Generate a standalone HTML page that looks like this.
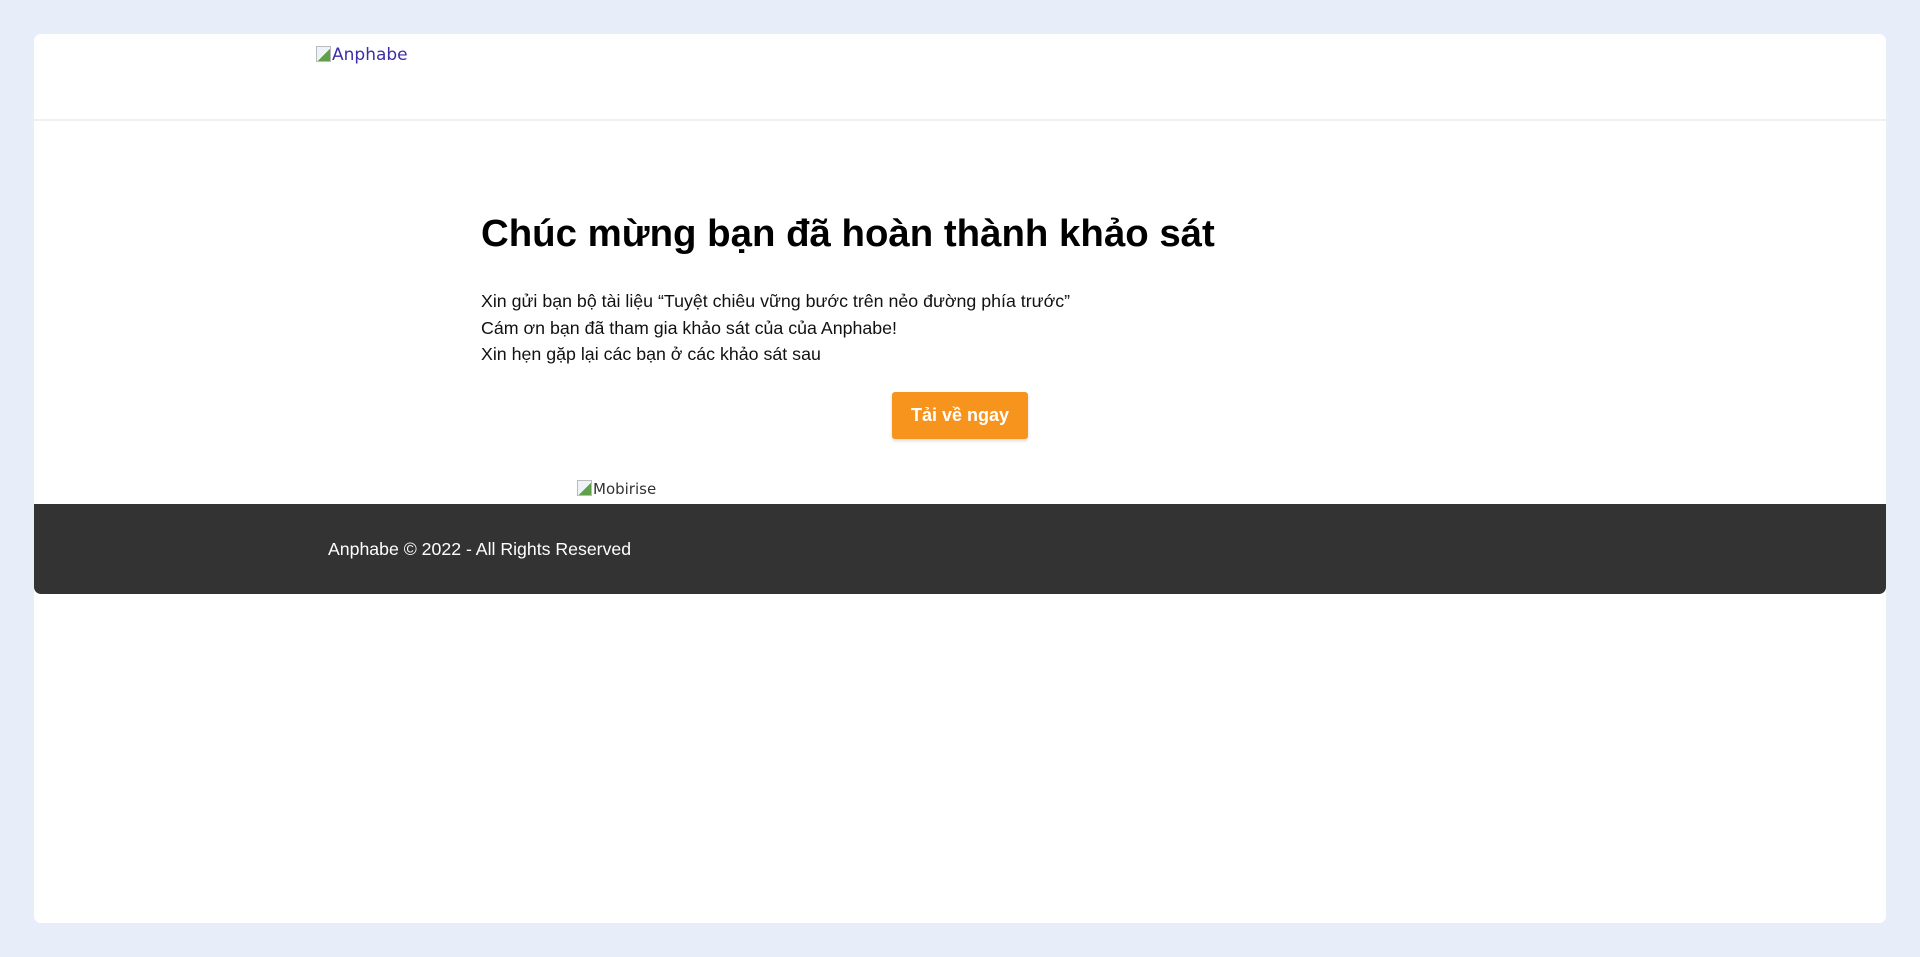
<!DOCTYPE html>
<html><head><meta charset="utf-8"><style>
html,body{margin:0;padding:0;}
body{width:1920px;height:957px;background:#e8eef9;position:relative;overflow:hidden;font-family:"Liberation Sans",Arial,sans-serif;}
.card{position:absolute;left:34px;top:34px;width:1852px;height:889px;background:#fff;border-radius:7px;overflow:hidden;}
.hdr{position:absolute;left:0;top:0;width:100%;height:85px;border-bottom:2px solid #eef0f3;}
.logo{position:absolute;left:282px;top:11px;font-family:"DejaVu Sans",sans-serif;font-size:17px;color:#3b2fa8;}
.ic{display:inline-block;width:15px;height:16px;border:1px solid #bbb;box-sizing:border-box;background:linear-gradient(135deg,#eef3f8 55%,#5ea14a 55%);vertical-align:-2px;margin-right:1px;}
h1{position:absolute;left:447px;top:176px;margin:0;font-size:38.4px;line-height:48px;font-weight:bold;color:#000;white-space:nowrap;}
.p{position:absolute;left:447px;top:254px;font-size:17.8px;line-height:26.5px;color:#111;white-space:nowrap;}
.btn{position:absolute;left:858px;top:358px;width:136px;height:47px;background:#f7941d;border-radius:3px;color:#fff;font-weight:bold;font-size:18px;text-align:center;line-height:47px;box-shadow:0 2px 3px rgba(0,0,0,.15);}
.mob{position:absolute;left:543px;top:446px;font-family:"DejaVu Sans",sans-serif;font-size:15px;color:#333;}
.ftr{position:absolute;left:0;top:470px;width:100%;height:90px;background:#333;border-radius:0 0 7px 7px;}
.ftr span{position:absolute;left:294px;top:35px;color:#fff;font-size:17.7px;}
</style></head><body>
<div class="card">
<div class="hdr"><div class="logo"><span class="ic"></span>Anphabe</div></div>
<h1>Chúc mừng bạn đã hoàn thành khảo sát</h1>
<div class="p">Xin gửi bạn bộ tài liệu “Tuyệt chiêu vững bước trên nẻo đường phía trước”<br>Cám ơn bạn đã tham gia khảo sát của của Anphabe!<br>Xin hẹn gặp lại các bạn ở các khảo sát sau</div>
<div class="btn">Tải về ngay</div>
<div class="mob"><span class="ic"></span>Mobirise</div>
<div class="ftr"><span>Anphabe © 2022 - All Rights Reserved</span></div>
</div>
</body></html>
